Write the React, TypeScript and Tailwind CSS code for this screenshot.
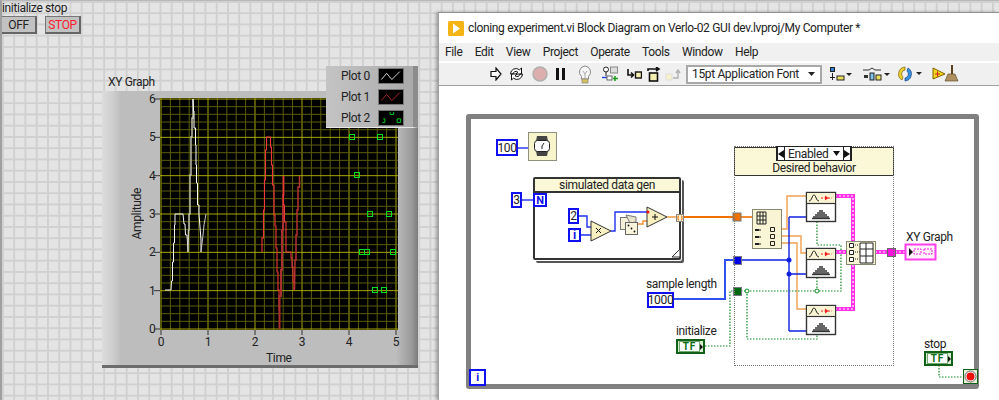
import React from "react";

const FONT = "font-['Roboto','Noto_Sans',sans-serif]";

const range = (n: number) => Array.from({ length: n }, (_, i) => i);

const px = (t: number) => 161 + 47 * t;
const py = (v: number) => 329 - 38.33 * v;

const whiteUp = "165,290 171,290 171.5,281 172.5,281 172.5,262 173.5,262 173.5,243 174.5,243 174.5,225 175,225 175,214 183,214 184,224 185,224 185.5,235 187,235 188,252";
const whiteA = "188,252 188.5,230 189,230 189,214 190,214 190,175 191,175 191,137 192,137 192,118 193,118 193,99";
const whiteB = "193,99 193.5,111 194,111 194,128 195.5,128 195.5,145 196,145 196,165 196.5,165 196.5,183 197.5,183 197.5,205 199,205 199,214 201,240 201,252";
const whiteC = "201,252 203,235 204,225 206,214";
const redA = "262,252 262,238 263.5,238 263.5,210 264.5,210 264.5,180 265.5,180 265.5,150 266.5,150 266.5,137 270.5,137 270.5,147 271.5,147 271.5,165 272.5,165 272.5,185 274,185 274,215 275,215 275,226 276,226 276,248 277,248 277,272 278,272 278,290 279,290 279,310 279.5,310 279.5,329";
const redB = "279.5,329 279.5,296 281,296 281,270 282,270 282,230 283,230 283,195 283.5,195 283.5,176";
const redC = "283.5,176 283.5,205 284.5,205 284.5,222 286,222 286,252 291,252 291,258 292,258 292,267 293,267 293,282 294,282 294,290";
const redD = "294.5,290 295,260 296,260 296,235 297,235 297,210 298,210 298,187 299.5,187 299.5,176";
const points = [
  [352, 137], [380, 137], [357, 175], [370, 214], [389, 214],
  [362, 252], [367, 252], [393, 252], [375, 290], [384, 290],
];

function Plot() {
  return (
    <svg width="238" height="232" viewBox="160 98 238 232" className="block shrink-0 overflow-visible">
      <rect x="160" y="98" width="238" height="232" fill="#000" />
      {range(26).map((i) => (
        <line key={i} x1={px(i / 5)} x2={px(i / 5)} y1="98" y2="330" stroke={i % 5 === 0 ? "#a8a800" : "#5c5c0c"} strokeWidth="1" />
      ))}
      {range(31).map((i) => (
        <line key={i} y1={py(i / 5)} y2={py(i / 5)} x1="160" x2="398" stroke={i % 5 === 0 ? "#a8a800" : "#5c5c0c"} strokeWidth="1" />
      ))}
      {range(6).map((i) => <line key={i} x1={px(i)} x2={px(i)} y1="330" y2="335" stroke="#333" />)}
      {range(7).map((i) => <line key={i} y1={py(i)} y2={py(i)} x1="154" x2="160" stroke="#333" />)}
      <polyline points={whiteUp} fill="none" stroke="#f4f4f4" />
      <polyline points={whiteA} fill="none" stroke="#c8c8b8" strokeWidth="1.4" />
      <polyline points={whiteB} fill="none" stroke="#ffffff" />
      <polyline points={whiteC} fill="none" stroke="#c8c8c8" />
      <polyline points={redA} fill="none" stroke="#f03838" strokeWidth="1.1" />
      <polyline points={redB} fill="none" stroke="#a83030" strokeWidth="2" />
      <polyline points={redC} fill="none" stroke="#e83838" strokeWidth="1.1" />
      <polyline points={redD} fill="none" stroke="#b83232" strokeWidth="1.5" />
      {points.map(([x, y], i) => (
        <rect key={i} x={x - 2.5} y={y - 2.5} width="5" height="5" fill="none" stroke="#00e020" />
      ))}
    </svg>
  );
}

function LegendRow({ name, children }: { name: string; children: React.ReactNode }) {
  return (
    <div className="flex h-[16px] items-center justify-between">
      <span className="text-[#222]">{name}</span>
      <svg width="26" height="16" viewBox="0 0 26 16" className="block border border-[#777] bg-black">{children}</svg>
    </div>
  );
}

function XYGraph() {
  return (
    <div className="relative mt-[39px] ml-[100px] w-[316px]">
      <div className="h-[18px] pl-[6px] leading-[18px] text-[#222]">XY Graph</div>
      <div className="h-[277px] border-b-[3px] border-b-[#6c6c6c] bg-[linear-gradient(90deg,#dcdcdc_0,#d0d0d0_3%,#bdbdbd_6%,#bdbdbd_93%,#9a9a9a_98%,#7c7c7c_100%)] pt-[7px]">
        <div className="flex pl-[28px]">
          <div className="flex h-[232px] w-[14px] items-center justify-center">
            <span className="rotate-180 text-[#222] [writing-mode:vertical-rl]">Amplitude</span>
          </div>
          <div className="-mt-[6px] -mb-[6px] ml-[5px] flex h-[244px] w-[11px] flex-col-reverse justify-between leading-[14px] text-[#222]">
            {range(7).map((i) => <span key={i}>{i}</span>)}
          </div>
          <Plot />
        </div>
        <div className="mt-[4px] ml-[55px] flex w-[243px] justify-between leading-[16px] text-[#222]">
          {range(6).map((i) => <span key={i} className="w-[8px] text-center">{i}</span>)}
        </div>
        <div className="mt-[1px] ml-[164px] leading-[14px] text-[#222]">Time</div>
      </div>
      <div className="absolute top-[-7px] right-0 flex h-[62px] w-[92px] flex-col justify-center gap-[5px] border-r-[5px] border-b-[1px] border-r-[#8c8c8c] border-b-[#e8e8e8] bg-gradient-to-r from-[#c4c4c4] to-[#aaaaaa] pr-[9px] pl-[15px]">
        <LegendRow name="Plot 0"><polyline points="2,12 8,5 14,12 23,3" fill="none" stroke="#eee" /></LegendRow>
        <LegendRow name="Plot 1"><polyline points="2,12 8,5 14,12 23,3" fill="none" stroke="#c03030" /></LegendRow>
        <LegendRow name="Plot 2">
          <path d="M4 9h2v4H3M12 1v3h4V1M20 9h4v4h-4z" fill="none" stroke="#00e020" />
        </LegendRow>
      </div>
    </div>
  );
}

function PanelButton({ children, red }: { children: string; red?: boolean }) {
  return (
    <div className={`flex h-[18px] w-[36px] items-center justify-center border-t border-r-2 border-b-2 border-l border-t-[#777] border-r-[#666] border-b-[#666] border-l-[#777] bg-[#c2c2c2] ${red ? "text-[#ff1a2e]" : "text-[#222]"}`}>
      {children}
    </div>
  );
}

function FrontPanel() {
  return (
    <div className="w-[436px] shrink-0">
      <div className="h-[15px] leading-[15px] text-[#222]">initialize stop</div>
      <div className="-ml-px flex gap-[8px]">
        <PanelButton>OFF</PanelButton>
        <PanelButton red>STOP</PanelButton>
      </div>
      <XYGraph />
    </div>
  );
}

const MENUS = ["File", "Edit", "View", "Project", "Operate", "Tools", "Window", "Help"];

function TitleBar() {
  return (
    <div className="flex h-[30px] items-center pl-[9px] text-[#222]">
      <svg width="16" height="15" viewBox="0 0 16 15" className="mr-[4px] shrink-0">
        <rect width="16" height="15" rx="1.5" fill="#f5b416" />
        <path d="M5 2.5 12 7.5 5 12.5z" fill="#fff" />
      </svg>
      <span className="whitespace-nowrap">cloning experiment.vi Block Diagram on Verlo-02 GUI dev.lvproj/My Computer *</span>
    </div>
  );
}

function MenuBar() {
  return (
    <div className="flex h-[18px] items-center gap-[12.25px] bg-[#f0f0f0] pl-[6px] text-[#222]">
      {MENUS.map((m) => <span key={m}>{m}</span>)}
    </div>
  );
}

function Toolbar() {
  return (
    <div className="flex h-[25px] items-center border-t-2 border-b border-t-white border-b-[#a0a0a0] bg-[#f0f0f0] pl-[51px]">
      <svg width="12" height="14" viewBox="0 0 12 14" className="shrink-0"><path d="M1 4.5h5V1l5 6-5 6V9.5H1z" fill="#fff" stroke="#111" strokeWidth="1.2" /></svg>
      <svg width="15" height="14" viewBox="0 0 15 14" className="ml-[7px] shrink-0">
        <path d="M1.500 7a5.500 5.500 0 0 1 9-4.200L12.500 1v6H7l1.800-2A3 3 0 0 0 4 7zM13.500 7a5.500 5.500 0 0 1-9 4.200L2.500 13V7H8l-1.800 2A3 3 0 0 0 11 7z" fill="#fff" stroke="#111" />
      </svg>
      <svg width="16" height="16" viewBox="0 0 16 16" className="ml-[8px] shrink-0"><circle cx="8" cy="8" r="7" fill="#dcaeae" stroke="#b0b0b0" strokeWidth="1.5" /></svg>
      <svg width="9" height="12" viewBox="0 0 9 12" className="ml-[8px] shrink-0"><path d="M0 0h3v12H0zM6 0h3v12H6z" fill="#111" /></svg>
      <svg width="14" height="19" viewBox="0 0 14 19" className="ml-[13px] shrink-0">
        <path d="M7 1a6 6 0 0 0-3.500 10.500V14h7v-2.500A6 6 0 0 0 7 1z" fill="#f6f6f6" stroke="#888" />
        <path d="M5 6l2 3 2-3M7 9v5" fill="none" stroke="#aaa" />
        <rect x="4" y="14" width="6" height="4" fill="#d8c060" stroke="#777" strokeWidth=".6" />
      </svg>
      <svg width="16" height="16" viewBox="0 0 16 16" className="ml-[10px] shrink-0">
        <circle cx="4" cy="3.500" r="2.500" fill="#fff" stroke="#222" />
        <path d="M4 6v4" stroke="#222" />
        <rect x="8.500" y="1" width="7" height="6" fill="#ddd" stroke="#888" />
        <path d="M0 11.500h9" stroke="#2040e0" strokeWidth="1.4" />
        <rect x="5" y="10" width="5" height="4" fill="#fff" stroke="#666" />
        <path d="M13 10v5M11 12.500h5" stroke="#20a020" strokeWidth="1.6" />
      </svg>
      <svg width="15" height="12" viewBox="0 0 15 12" className="ml-[9px] shrink-0">
        <path d="M1 1v6h5M4 4.500 6.500 7 4 9.500" fill="none" stroke="#111" strokeWidth="1.6" />
        <rect x="8.500" y="4" width="6" height="6" fill="#f4eeb0" stroke="#111" strokeWidth="1.4" />
      </svg>
      <svg width="15" height="15" viewBox="0 0 15 15" className="ml-[5px] shrink-0">
        <path d="M1 4V2h10M9 0l3 2-3 2" fill="none" stroke="#111" strokeWidth="1.6" />
        <rect x="2.500" y="6" width="8" height="8" fill="#f4eeb0" stroke="#111" strokeWidth="1.6" />
      </svg>
      <svg width="16" height="15" viewBox="0 0 16 15" className="ml-[3px] shrink-0">
        <rect x="1" y="7" width="6" height="6" fill="#f6f2cc" stroke="#ddd" />
        <path d="M8 11h5V5M11 6l2-3 2 3" fill="none" stroke="#b0b0b0" strokeWidth="1.4" />
      </svg>
      <div className="ml-[5px] flex h-[19px] w-[136px] shrink-0 items-center justify-between border-2 border-[#a8a8a8] bg-white pr-[5px] pl-[4px] text-[#222]">
        <span className="whitespace-nowrap">15pt Application Font</span>
        <svg width="7" height="4" viewBox="0 0 7 4"><path d="M0 0h7L3.500 4z" fill="#222" /></svg>
      </div>
      <svg width="22" height="14" viewBox="0 0 22 14" className="ml-[8px] shrink-0">
        <rect x="0.500" y="0.500" width="4" height="4" fill="#3080d0" stroke="#222" />
        <path d="M2.500 6v2M0 10.500h5M2.500 8v5" stroke="#222" />
        <rect x="7" y="9" width="7" height="4" fill="#f0e060" stroke="#222" />
        <path d="M16 6h6l-3 3z" fill="#222" />
      </svg>
      <svg width="28" height="14" viewBox="0 0 28 14" className="ml-[10px] shrink-0">
        <path d="M1 3h6l3-2 3 2h6" fill="none" stroke="#333" />
        <rect x="2" y="8" width="4" height="3" fill="#333" />
        <rect x="8" y="6" width="4" height="7" fill="#7cc0e8" stroke="#222" />
        <rect x="14" y="8" width="5" height="5" fill="#f0e060" stroke="#222" />
        <path d="M22 6h6l-3 3z" fill="#222" />
      </svg>
      <svg width="25" height="16" viewBox="0 0 25 16" className="ml-[7px] shrink-0">
        <path d="M8 1a7 7 0 0 0-3 13l1-3a4 4 0 0 1 2-7z" fill="#e8d030" stroke="#806000" strokeWidth=".7" />
        <path d="M8 15a7 7 0 0 0 3-13l-1 3a4 4 0 0 1-2 7z" fill="#3090e0" stroke="#204080" strokeWidth=".7" />
        <path d="M19 6h6l-3 3z" fill="#222" />
      </svg>
      <svg width="30" height="18" viewBox="0 0 30 18" className="ml-[10px] shrink-0">
        <path d="M1 3 13 9 1 14z" fill="#f0d820" stroke="#806000" />
        <path d="M3 9h5M5.500 6.500v5" stroke="#d02020" />
        <path d="M19 0h2v9h-2z" fill="#604020" />
        <path d="M13 16l3-7h7l3 7z" fill="#b09060" stroke="#504020" strokeWidth=".6" />
      </svg>
    </div>
  );
}

const Wire = ({ d, c = "#2030f0", w = 1.4 }: { d: string; c?: string; w?: number }) => (
  <path d={d} fill="none" stroke={c} strokeWidth={w} />
);
const Dotted = ({ d }: { d: string }) => (
  <path d={d} fill="none" stroke="#108a20" strokeWidth="1.2" strokeDasharray="1.500 1.500" />
);
const Pink = ({ d }: { d: string }) => (
  <>
    <path d={d} fill="none" stroke="#ff30e8" strokeWidth="4" />
    <path d={d} fill="none" stroke="#fff" strokeWidth="1.200" strokeDasharray="2 2" />
  </>
);

function Hist({ y }: { y: number }) {
  return (
    <g transform={`translate(806 ${y})`}>
      <rect x="0.500" y="0.500" width="29" height="29" fill="#fff" stroke="#333" strokeWidth="1.400" />
      <rect x="1" y="1" width="28" height="10" fill="#f8f4d4" />
      <path d="M0 11.500h30" stroke="#333" strokeWidth="1.200" />
      <path d="M3 9c3 0 3-6 5-6s2 6 5 6" fill="none" stroke="#222" />
      <path d="M15 6h11" stroke="#f02020" strokeDasharray="2 1.500" />
      <path d="M19 3.500l3.500 2.500-3.500 2.500z" fill="#f02020" />
      <path d="M6 26.500h18" stroke="#333" strokeWidth="1.400" />
      <path d="M8 26v-2M10 26v-4M12 26v-6M14 26v-8M16 26v-8M18 26v-6M20 26v-4M22 26v-2" stroke="#333" strokeWidth="1.500" />
    </g>
  );
}

function Wires() {
  return (
    <svg width="560" height="314" viewBox="439 86 560 314" className="absolute inset-0">
      <Wire d="M518 148h10" />
      <Wire d="M522 200h11" />
      <Wire d="M579 216h8v11h4M581 235h10M611 231h4v-19h32" />
      <Wire d="M638 224h5v-3h4" c="#f09030" />
      <Wire d="M667 217h9" c="#f09030" />
      <Wire d="M683 217h50" c="#f07000" w={2} />
      <Wire d="M741 217h11" c="#f07000" w={1.600} />
      <Wire d="M781 229h6v-33h19M781 236h20v17h5M781 243h16v66h9" c="#f0a050" />
      <Wire d="M674 299h51v-39h9" c="#3050f0" w={2} />
      <Wire d="M741 260h48M789 217v114M789 217h17M789 274h17M789 331h17" c="#1020e0" />
      <circle cx="789" cy="260" r="2.500" fill="#1020e0" />
      <circle cx="789" cy="274" r="2.500" fill="#1020e0" />
      <Dotted d="M705 346h25v-55h4M741 291h100v-46h-24v-24M817 291v-13M747 291v48h70v-4" />
      <circle cx="747" cy="291" r="2" fill="#fff" stroke="#108a20" />
      <circle cx="817" cy="291" r="2" fill="#fff" stroke="#108a20" />
      <Dotted d="M939 365v12h24" />
      <Pink d="M835 196h18v45M835 252h11M835 309h18v-45M875 252h30" />
      <Hist y={192} />
      <Hist y={248} />
      <Hist y={305} />

      <rect x="528.500" y="132.500" width="28" height="28" fill="#f8f4cc" stroke="#909080" />
      <path d="M537 136h10l1 5h-12zM537 156h10l1-5h-12z" fill="#444" />
      <rect x="534.500" y="140.500" width="15" height="11" rx="3" fill="#fff" stroke="#222" />
      <path d="M542 146l2-3M542 146v3" stroke="#222" />

      <path d="M591 221l20 10-20 10z" fill="#f8f0c0" stroke="#333" />
      <path d="M596 228l5 5M601 228l-5 5" stroke="#111" />
      <path d="M647 207l20 10-20 10z" fill="#f8f0c0" stroke="#333" />
      <path d="M652 217h6M655 214v6" stroke="#111" />
      <circle cx="648" cy="212" r="1.500" fill="#f01010" />
      <rect x="620.500" y="217.500" width="11" height="12" fill="#f4efd8" stroke="#777" />
      <path d="M626 215l10 2v5l-6 1z" fill="#e8e4cc" stroke="#777" />
      <rect x="625.500" y="222.500" width="12" height="12" fill="#f8f4dc" stroke="#666" />
      <circle cx="628.500" cy="225.500" r=".9" fill="#111" /><circle cx="631.500" cy="228.500" r=".9" fill="#111" /><circle cx="634.500" cy="231.500" r=".9" fill="#111" />
      <rect x="676.500" y="214.500" width="7" height="7" fill="#f8f0d0" stroke="#888" />
      <path d="M679 216h-1v4h1M681 216h1v4h-1" fill="none" stroke="#f07000" />
      <path d="M672 257l8-8v8z" fill="#fff" stroke="#333" />
      <rect x="733" y="213" width="8" height="8" fill="#f07000" stroke="#777" />
      <rect x="733.500" y="256.500" width="8" height="8" fill="#0000e0" stroke="#778" />
      <rect x="733.500" y="287.500" width="8" height="8" fill="#006a10" stroke="#778" />
      <rect x="887.500" y="248.500" width="8" height="8" fill="#ff10e0" stroke="#666" />

      <rect x="752.500" y="209.500" width="29" height="39" fill="#f8f4d4" stroke="#888870" />
      <path d="M757 212h9v12h-9zM757 216h9M757 220h9M760 212v12M763 212v12" fill="none" stroke="#222" />
      <path d="M755 230h4M755 237h4M755 244h4" stroke="#222" strokeWidth="2" />
      <path d="M760 229v2M760 236v2M760 243v2" stroke="#222" />
      <path d="M770.500 227.500h4v4h-4zM770.500 234.500h4v4h-4zM770.500 241.500h4v4h-4z" fill="none" stroke="#222" />

      <rect x="846.500" y="241.500" width="29" height="23" fill="#f8f4d4" stroke="#888870" />
      <path d="M849.500 243.500h4v4h-4zM849.500 250.500h4v4h-4zM849.500 257.500h4v4h-4z" fill="#fff" stroke="#222" />
      <path d="M855 245h4M855 252h5M855 259h4" stroke="#222" strokeDasharray="1 1" />
      <path d="M860 243h13v20h-13zM860 249h13M860 256h13M866 243v20" fill="#fff" stroke="#222" />

      <rect x="905.500" y="244.500" width="30" height="15" fill="#fff0fc" stroke="#ff40ec" strokeWidth="2" />
      <path d="M909 248v8l4-4z" fill="#111" />
      <path d="M914 249h7v5h-7zM924 249h8v5h-8z" fill="none" stroke="#f020e0" strokeDasharray="2 1" />

      <rect x="963.500" y="369.500" width="14" height="14" fill="#e8f0d8" stroke="#106018" />
      <circle cx="970.500" cy="376.500" r="5.500" fill="#fff" stroke="#666" />
      <circle cx="970.500" cy="376.500" r="4" fill="#f01010" />
    </svg>
  );
}

function BlueConst({ className, children }: { className: string; children: string }) {
  return (
    <div className={`absolute flex items-center justify-center border-2 border-[#1010f0] bg-white leading-none text-[#222] ${className}`}>
      {children}
    </div>
  );
}

function Label({ className, children }: { className: string; children: string }) {
  return <div className={`absolute whitespace-nowrap leading-[14px] text-[#222] ${className}`}>{children}</div>;
}

function Terminal({ className }: { className: string }) {
  return (
    <div className={`absolute flex h-[15px] w-[29px] items-center border-2 border-[#106018] bg-[#d8ecd0] pl-[2px] ${className}`}>
      <div className="flex h-[9px] w-[20px] items-center justify-center bg-white text-[10px] leading-none font-bold tracking-[1px] text-[#0c6c18] outline outline-[#70a870]">TF</div>
      <span className="ml-[1px] h-0 w-0 border-y-[3px] border-l-[3px] border-y-transparent border-l-[#111]" />
    </div>
  );
}

function SelectorArrow({ left }: { left?: boolean }) {
  return (
    <span className="flex h-full w-[8px] items-center justify-center border-x border-[#222] bg-white">
      <svg width="6" height="8" viewBox="0 0 6 8"><path d={left ? "M6 0v8L0 4z" : "M0 0v8l6-4z"} fill="#111" /></svg>
    </span>
  );
}

function Diagram() {
  return (
    <div className="relative flex-1 overflow-hidden bg-white">
      <div className="absolute top-[28px] left-[27px] h-[275px] w-[513px] rounded-[3px] border-[5px] border-[#808080]" />
      <BlueConst className="top-[53px] left-[57px] h-[17px] w-[22px]">100</BlueConst>
      <BlueConst className="top-[106px] left-[72px] h-[16px] w-[11px]">3</BlueConst>

      <div className="absolute top-[91px] left-[94px] h-[83px] w-[148px] rounded-[2px] border-[2px] border-[#333] shadow-[1px_1px_0_#fff,3px_3px_0_#555]">
        <div className="flex h-[14px] items-center justify-center border-b-2 border-[#333] bg-[#fbf8d8] text-[#222]">simulated data gen</div>
      </div>
      <div className="absolute top-[107px] left-[94px] flex h-[14px] w-[14px] items-center justify-center border-2 border-[#1010f0] bg-white text-[11px] font-bold leading-none text-[#1010f0]">N</div>
      <BlueConst className="top-[122px] left-[129px] h-[16px] w-[11px]">2</BlueConst>
      <BlueConst className="top-[142px] left-[129px] h-[14px] w-[13px] font-bold text-[#1010f0]">i</BlueConst>

      <Wires />

      <div className="absolute top-[61px] left-[295px] flex h-[29px] w-[160px] flex-col border border-[#333] bg-[#fbf8d8]">
        <div className="h-[14px]" />
        <div className="text-center leading-[14px] text-[#222]">Desired behavior</div>
      </div>
      <div className="absolute top-[60px] left-[295px] h-[220px] w-[160px] border border-dotted border-[#777]" />
      <div className="absolute top-[60px] left-[337px] flex h-[15px] w-[76px] items-center border border-[#222] bg-white text-[#222]">
        <SelectorArrow left />
        <span className="ml-[3px] flex-1 leading-none">Enabled</span>
        <svg width="7" height="5" viewBox="0 0 7 5" className="mr-[3px]"><path d="M0 0h7L3.500 5z" fill="#111" /></svg>
        <SelectorArrow />
      </div>

      <BlueConst className="top-[206px] left-[208px] h-[16px] w-[27px]">1000</BlueConst>
      <Label className="top-[191px] left-[207px]">sample length</Label>
      <Label className="top-[238px] left-[237px]">initialize</Label>
      <Terminal className="top-[253px] left-[237px]" />
      <Label className="top-[251px] left-[485px]">stop</Label>
      <Terminal className="top-[265px] left-[485px]" />
      <Label className="top-[144px] left-[467px]">XY Graph</Label>
      <div className="absolute top-[283px] left-[30px] flex h-[17px] w-[17px] items-center justify-center border-2 border-[#1010f0] bg-white text-[11px] font-bold leading-none text-[#1010f0]">i</div>
    </div>
  );
}

function Window() {
  return (
    <div className="mt-[11px] flex h-[388px] min-w-0 flex-1 flex-col border-t border-l border-t-[#909090] border-l-[#a0a0a0] bg-white shadow-[-2px_0_3px_rgba(0,0,0,0.3)]">
      <TitleBar />
      <MenuBar />
      <Toolbar />
      <Diagram />
    </div>
  );
}

export default function App() {
  return (
    <div className={`flex h-[400px] w-[999px] overflow-hidden border-t border-l-2 border-t-[#b8b8b8] border-l-[#a0a0a0] bg-[#e4e4e4] bg-[linear-gradient(#d0d0d0_1.5px,transparent_1.5px),linear-gradient(90deg,#d0d0d0_1.5px,transparent_1.5px)] bg-[size:11.25px_11.25px] text-[12px] tracking-[-0.35px] ${FONT}`}>
      <FrontPanel />
      <Window />
    </div>
  );
}
